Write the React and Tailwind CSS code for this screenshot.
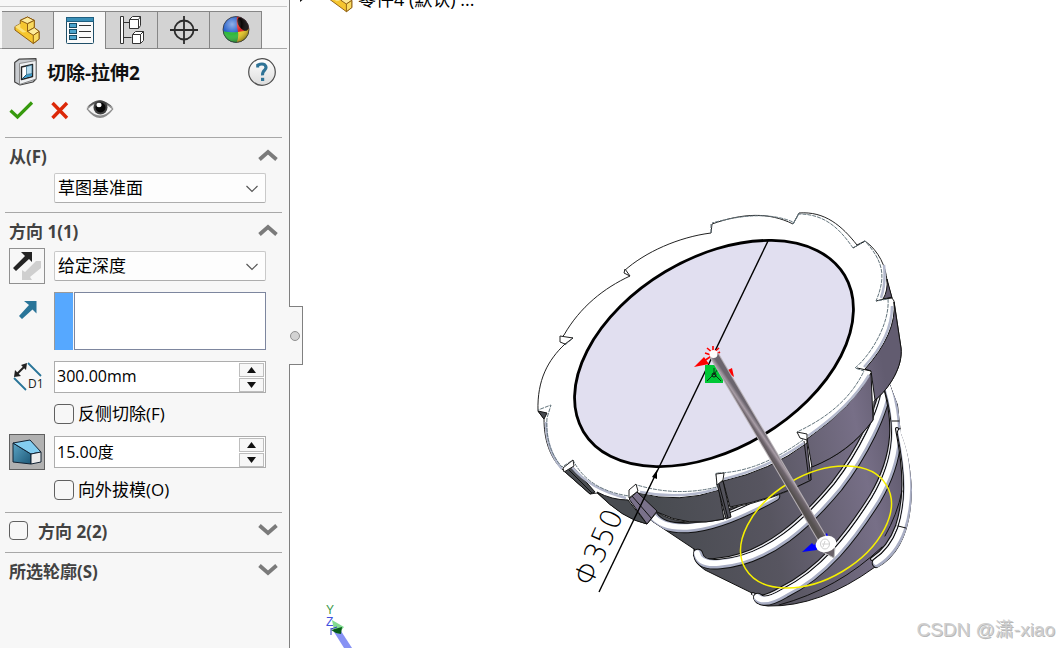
import React, { useState } from "react";

const uiFont = "font-['Open_Sans','Noto_Sans_CJK_SC',sans-serif]";

function PartIcon({ className }) {
  return (
    <svg className={className} viewBox="0 0 28 30" aria-hidden="true">
      <g stroke="#8a5a10" strokeWidth="1" strokeLinejoin="round">
        <path d="M1 11 L6.500 8 L6.500 4.500 L14 1 L21 4.500 L21 12 L26 16 L26 24 L20 28.500 L1 14.500Z" fill="#f6c62f" />
        <path d="M6.500 4.500 L14 1 L21 4.500 L14 8Z" fill="#fdeb9a" />
        <path d="M14 8 L21 4.500 L21 12 L14 16Z" fill="#f9d95e" />
        <path d="M14 16 L21 12 L26 16 L20 20Z" fill="#fdeb9a" />
        <path d="M20 20 L26 16 L26 24 L20 28.500Z" fill="#f9dc62" />
        <path d="M1 11 L6.500 8 L6.500 12 L13 16.500 L9 17Z" fill="#fbe27c" stroke="none" />
      </g>
    </svg>
  );
}

function PropertyIcon() {
  return (
    <svg width="28" height="27" viewBox="0 0 28 27" aria-hidden="true">
      <rect x="0.500" y="0.500" width="27" height="26" rx="1" fill="#fafafa" stroke="#1f4e68" />
      <rect x="0.500" y="0.500" width="27" height="4" fill="#3a8fb7" stroke="#1f5f80" />
      {[6.5, 12.5, 18.5].map((y) => (
        <g key={y}>
          <rect x="3.500" y={y} width="7" height="4" fill="#4ba3cc" stroke="#174a63" />
          <path d={`M13 ${y + 2}h12`} stroke="#333" strokeWidth="1" />
        </g>
      ))}
    </svg>
  );
}

function ConfigIcon() {
  return (
    <svg width="24" height="28" viewBox="0 0 24 28" fill="#fff" stroke="#333" strokeLinejoin="round" aria-hidden="true">
      <path d="M0.500 0.500h3v27h-3z" />
      <path d="M3.500 6.500h6M3.500 21.500h8" />
      <path d="M9.500 3.500l3-3h8v9l-2 3h-9z" />
      <path d="M9.500 3.500h9v9M18.500 3.500l2-3" />
      <path d="M12.500 18.500l3-3h8v9l-3 3h-8z" />
      <path d="M12.500 18.500h8v9M20.500 18.500l3-3" />
    </svg>
  );
}

function TargetIcon() {
  return (
    <svg width="28" height="28" viewBox="0 0 28 28" fill="none" stroke="#2b2b2b" strokeWidth="1.800" aria-hidden="true">
      <circle cx="14" cy="14" r="9.500" />
      <path d="M14 0v28M0 14h28" />
    </svg>
  );
}

function SphereIcon() {
  return (
    <svg width="28" height="28" viewBox="0 0 28 28" aria-hidden="true">
      <defs>
        <clipPath id="ball"><circle cx="14" cy="13.500" r="13" /></clipPath>
        <radialGradient id="shine" cx="0.350" cy="0.300" r="0.750">
          <stop offset="0" stopColor="#fff" stopOpacity="0.500" />
          <stop offset="0.500" stopColor="#fff" stopOpacity="0" />
          <stop offset="1" stopColor="#000" stopOpacity="0.400" />
        </radialGradient>
      </defs>
      <g clipPath="url(#ball)">
        <rect width="28" height="28" fill="#2460cc" />
        <path d="M15 0 Q14 8 16 16 L28 17 V0Z" fill="#e02020" />
        <path d="M0 15 Q8 17 16 16 Q17 23 14 28 H0Z" fill="#2fb83a" />
        <path d="M16 16 Q22 16 28 12 V28 H14 Q17 22 16 16Z" fill="#eccb20" />
        <ellipse cx="21" cy="8" rx="4.500" ry="7.500" transform="rotate(-35 21 8)" fill="#0a0505" />
      </g>
      <circle cx="14" cy="13.500" r="13" fill="url(#shine)" stroke="#333" strokeWidth="0.800" />
    </svg>
  );
}

function CutIcon() {
  return (
    <svg width="24" height="28" viewBox="0 0 24 28" strokeLinejoin="round" aria-hidden="true">
      <path d="M0.700 4.500L5 1.200L22 0.700V21L19 24L6 27L0.700 24Z" fill="#c9ccd0" stroke="#444" strokeWidth="1.200" />
      <path d="M5.500 5.500L22 2.500V21L5.500 26.500Z" fill="#eef0f2" stroke="#777" strokeWidth="0.800" />
      <path d="M7.500 9L18.500 6.500V18.500L7.500 21.500Z" fill="#fff" stroke="#222" strokeWidth="1.400" />
      <path d="M8.500 20.500L12.500 16.500L18 15.500V18Z" fill="#3b9ccb" />
      <path d="M12.500 8.500V16.500L18 15.500V7Z" fill="#b9dced" stroke="#28627f" strokeWidth="0.700" />
      <path d="M8 21L12.500 16.500" stroke="#1b536f" />
    </svg>
  );
}

function EyeIcon() {
  return (
    <svg width="28" height="20" viewBox="0 0 28 20" className="mb-0.5" aria-hidden="true">
      <path d="M0.500 10Q13 -7 27.500 10Q14 28 0.500 10Z" fill="#8b8b8b" />
      <path d="M2 10Q13 -2 26 10Q14 23 2 10Z" fill="#f4f4f4" />
      <path d="M0.500 9Q13 -6.500 27.500 9Q14 -1 0.500 9Z" fill="#5a5a5a" />
      <circle cx="14.500" cy="8.500" r="7" fill="#404040" />
      <circle cx="14.500" cy="8.500" r="5" fill="#080808" />
      <ellipse cx="13" cy="6" rx="2.600" ry="2.200" fill="#fff" />
    </svg>
  );
}

function Chevron({ down }) {
  return (
    <svg width="20" height="12" viewBox="0 0 20 12" className="mb-1" fill="none" stroke="#7b7b7b" strokeWidth="3.800" aria-hidden="true">
      <path d={down ? "M1.500 1.500L10 9L18.500 1.500" : "M1.500 10.500L10 3L18.500 10.500"} />
    </svg>
  );
}

function Dropdown({ label, options }) {
  return (
    <div className="relative w-[212px]">
      <select aria-label={label} className="block h-[30px] w-full appearance-none rounded-xs border border-[#c9c9c9] border-b-[#adadad] bg-[#fdfdfd] pl-[3px] text-[17px] leading-6 text-black outline-none">
        {options.map((o) => <option key={o}>{o}</option>)}
      </select>
      <svg className="pointer-events-none absolute top-3 right-2" width="12" height="8" viewBox="0 0 12 8" fill="none" stroke="#555" strokeWidth="1.200" aria-hidden="true">
        <path d="M0.500 1L6 6.500L11.500 1" />
      </svg>
    </div>
  );
}

function Spinner({ label, initial, step, unit }) {
  const [text, setText] = useState(initial);
  const bump = (d) => setText((parseFloat(text) + d * step).toFixed(2) + unit);
  const btn = "flex h-[14px] w-[25px] items-center justify-center border border-[#bdbdbd] bg-[#f7f7f7]";
  return (
    <div className="flex h-8 w-[212px] items-center border border-[#adadad] bg-white pr-px">
      <input aria-label={label} value={text} onChange={(e) => setText(e.target.value)} className="h-7 min-w-0 flex-1 bg-transparent pb-0.5 pl-0.5 text-base leading-6 text-black outline-none" />
      <div className="flex flex-col gap-px">
        <button type="button" aria-label={label + " +"} onClick={() => bump(1)} className={btn}>
          <svg width="9" height="6" viewBox="0 0 9 6" aria-hidden="true"><path d="M0 6L4.500 0L9 6Z" fill="#111" /></svg>
        </button>
        <button type="button" aria-label={label + " -"} onClick={() => bump(-1)} className={btn}>
          <svg width="9" height="6" viewBox="0 0 9 6" aria-hidden="true"><path d="M0 0L4.500 6L9 0Z" fill="#111" /></svg>
        </button>
      </div>
    </div>
  );
}

function Check({ label }) {
  return (
    <label className="flex h-5 items-center gap-1 pl-[45px] text-[17px] leading-5 text-black">
      <input type="checkbox" className="size-5 shrink-0 appearance-none rounded border border-[#606060] bg-[#f7f7f7] checked:bg-[#2b7fc4]" />
      <span>{label}</span>
    </label>
  );
}

function Section({ title, collapsed, checkable, children }) {
  return (
    <section className="mr-[7px] ml-[5px] border-t border-[#a8a8a8] pl-1">
      <div className={collapsed ? "flex h-[39px] items-center justify-between pr-1 pb-0.5" : "flex h-[35px] items-center justify-between pt-0.5 pr-1"}>
        {checkable ? (
          <label className="flex items-center gap-2.5 text-[17px] leading-6 font-bold text-[#424242]">
            <input type="checkbox" className="mb-0.5 size-[19px] appearance-none rounded border border-[#606060] bg-[#f7f7f7] checked:bg-[#2b7fc4]" />
            <span>{title}</span>
          </label>
        ) : (
          <h2 className="text-[17px] leading-6 font-bold text-[#424242]">{title}</h2>
        )}
        <button type="button" aria-label={title} aria-expanded={!collapsed}><Chevron down={collapsed} /></button>
      </div>
      {children}
    </section>
  );
}

function PropertyPanel() {
  const tabs = [
    ["FeatureManager", <PartIcon key="p" className="h-[29px] w-[27px]" />],
    ["PropertyManager", <PropertyIcon key="m" />],
    ["ConfigurationManager", <ConfigIcon key="c" />],
    ["DimXpertManager", <TargetIcon key="t" />],
    ["DisplayManager", <SphereIcon key="s" />],
  ];
  return (
    <aside className="relative z-10 flex w-[290px] shrink-0 flex-col border-r border-[#808080] bg-[#f7f7f7]">
      <div className="mr-0.5 h-[7px] border-b border-[#c8c8c8]" />
      <div role="tablist" className="mr-0.5 flex pt-1">
        <div className="w-0.5 border-b border-[#a8a8a8]" />
        {tabs.map(([name, icon], i) => (
          <button
            key={name}
            type="button"
            role="tab"
            aria-label={name}
            aria-selected={i === 1}
            className={
              i === 1
                ? "flex h-[38px] w-[52px] items-center justify-center border-t border-r border-[#868686] bg-[#f7f7f7]"
                : "flex h-[38px] w-[52px] items-center justify-center border-t border-r border-b border-[#868686] bg-[#d3d3d3]"
            }
          >
            {icon}
          </button>
        ))}
        <div className="flex-1 border-b border-[#a8a8a8]" />
      </div>

      <header className="flex items-center gap-[9px] pt-2 pr-[13px] pl-[14px]">
        <CutIcon />
        <h1 className="flex-1 pt-0.5 text-[19px] leading-7 font-bold text-[#111]">切除-拉伸2</h1>
        <button type="button" aria-label="帮助" className="size-7">
          <svg width="28" height="28" viewBox="0 0 28 28" aria-hidden="true">
            <defs>
              <linearGradient id="help" x2="0" y2="1"><stop stopColor="#fff" /><stop offset="1" stopColor="#dcdcdc" /></linearGradient>
            </defs>
            <circle cx="14" cy="14" r="13.300" fill="url(#help)" stroke="#4d4d4d" strokeWidth="1.200" />
            <path d="M9.700 9.500V7.200Q14 5 16.800 6.800Q19.300 9 16.800 12Q14.300 14 14.500 17.300" fill="none" stroke="#2f7396" strokeWidth="3" />
            <rect x="13" y="19.800" width="3.200" height="3.200" fill="#2f7396" />
          </svg>
        </button>
      </header>

      <div className="mt-[11px] mb-[15px] flex h-6 items-center gap-[17px] pl-[9px]">
        <button type="button" aria-label="确定">
          <svg width="25" height="20" viewBox="0 0 25 20" aria-hidden="true"><path d="M1.500 10.500L8.500 17L23 2.500" fill="none" stroke="#379a0e" strokeWidth="3.200" /></svg>
        </button>
        <button type="button" aria-label="取消">
          <svg width="18" height="20" viewBox="0 0 18 20" aria-hidden="true"><path d="M1.500 3L16 18M16 3L1.500 18" stroke="#dc2808" strokeWidth="3.400" /></svg>
        </button>
        <button type="button" aria-label="预览"><EyeIcon /></button>
      </div>

      <Section title="从(F)">
        <div className="pb-[9px] pl-[45px]"><Dropdown label="从" options={["草图基准面", "曲面/面/基准面", "顶点", "等距"]} /></div>
      </Section>

      <Section title="方向 1(1)">
        <div className="flex h-9 items-center gap-[9px]">
          <button type="button" aria-label="反向" className="flex size-9 items-center justify-center border border-[#909090]">
            <svg width="30" height="30" viewBox="0 0 30 30" aria-hidden="true">
              <path d="M29 10V17L18 26L20 29H10V19L13 21L24 10Z" fill="#cfcfcf" />
              <path d="M9 1H20V11L17 8L4 20L1 17L13 5Z" fill="#242424" />
            </svg>
          </button>
          <Dropdown label="终止条件" options={["给定深度", "完全贯穿", "成形到下一面", "两侧对称"]} />
        </div>
        <div className="mt-2 flex h-[58px]">
          <div className="w-[45px] pt-2 pl-[9px]">
            <svg width="19" height="20" viewBox="0 0 19 20" aria-hidden="true">
              <path d="M6 1H18.500V13.500L14.500 9.500L4 19L1 16L11 5Z" fill="#2a7599" />
            </svg>
          </div>
          <div className="mr-px w-[19px] border-t border-l border-[#999] bg-[#56a8ff]" />
          <div role="listbox" aria-label="拉伸方向" tabIndex={0} className="w-[192px] border border-[#7d869e] bg-white" />
        </div>
        <div className="mt-[11px] flex h-8">
          <div className="w-[45px] pl-1">
            <svg width="32" height="31" viewBox="0 0 32 31" aria-hidden="true">
              <path d="M15 2L28 15M1 17L13 29" stroke="#2a7599" strokeWidth="1.800" />
              <path d="M4 13L12 5" stroke="#222" strokeWidth="2" />
              <path d="M1 16L2 9L8 15ZM14 2L8 4L13 9Z" fill="#222" />
              <text x="15" y="27" fontSize="12" fill="#222" fontFamily="Open Sans, sans-serif">D1</text>
            </svg>
          </div>
          <Spinner label="深度" initial="300.00mm" step={10} unit="mm" />
        </div>
        <div className="mt-[11px]"><Check label="反侧切除(F)" /></div>
        <div className="mt-[10px] flex h-9 items-center gap-[9px]">
          <button type="button" aria-label="拔模" aria-pressed="true" className="flex size-9 items-center justify-center border border-[#606060] bg-[#b1b1b1]">
            <svg width="30" height="28" viewBox="0 0 30 28" strokeLinejoin="round" aria-hidden="true">
              <defs><linearGradient id="draft" x2="1" y2="1"><stop stopColor="#5ba5c6" /><stop offset="1" stopColor="#1d5877" /></linearGradient></defs>
              <path d="M1 5L19 16V26L1 24Z" fill="url(#draft)" stroke="#123" />
              <path d="M1 5L18 2L29 14L19 16Z" fill="#83cdf0" stroke="#123" />
              <path d="M19 16L29 14V24L19 26Z" fill="#ececec" stroke="#123" />
            </svg>
          </button>
          <Spinner label="拔模角度" initial="15.00度" step={1} unit="度" />
        </div>
        <div className="mt-[10px] pb-3"><Check label="向外拔模(O)" /></div>
      </Section>

      <Section title="方向 2(2)" collapsed checkable />
      <Section title="所选轮廓(S)" collapsed />

      <button type="button" aria-label="折叠面板" className="absolute top-[306px] -right-[14px] flex h-[59px] w-[14px] items-center justify-center border border-l-0 border-[#808080] bg-[#f7f7f7] pr-px">
        <span className="size-[10px] rounded-full border border-[#909090] bg-[#d3d3d3]" />
      </button>
    </aside>
  );
}

const ribs = [
  "M653 516 Q662 529 688 528 Q722 526 775 496",
  "M698 554 Q700 566 720 564 C770 560 808 523 838 487 C862 456 885 412 887 384",
  "M758 598 Q765 605 785 593 C825 573 852 538 876 500 C902 456 899 422 889 388",
  "M902 433 C911 478 910 505 902 530 Q894 552 877 563",
];

function Model() {
  return (
    <svg className="absolute inset-0 h-full w-full" viewBox="290 0 769 648" preserveAspectRatio="xMinYMin meet" role="img" aria-label="零件4">
      <defs>
        <linearGradient id="body" gradientUnits="userSpaceOnUse" x1="650" y1="500" x2="900" y2="450">
          <stop stopColor="#484b50" /><stop offset="0.450" stopColor="#575560" /><stop offset="0.850" stopColor="#776f87" /><stop offset="1" stopColor="#625c70" />
        </linearGradient>
        <linearGradient id="rod" gradientUnits="userSpaceOnUse" x1="765" y1="453" x2="774" y2="447">
          <stop stopColor="#55504f" /><stop offset="0.450" stopColor="#6f666e" /><stop offset="0.700" stopColor="#a89da6" /><stop offset="1" stopColor="#6b656e" />
        </linearGradient>
        <clipPath id="shape">
          <path d="M640 490L650 520L694 549Q690 565 705 572L754 596Q750 607 785 608Q830 602 877 568Q911 550 912 490Q910 455 901 434L898 405L888 380L800 420Z" />
        </clipPath>
      </defs>

      <path d="M640 490L652 521L694 549Q692 562 705 570L754 594Q751 605 768 606Q820 607 875 567Q908 549 911 490Q908 455 900 434L897 405L888 380L800 420Z" fill="url(#body)" stroke="#111" />
      <g clipPath="url(#shape)" fill="none" strokeLinecap="round">
        {ribs.map((d) => (
          <g key={d}>
            <path d={d} transform="translate(-5 -4)" stroke="#111" strokeWidth="4" />
            <path d={d} transform="translate(-5 -4)" stroke="#e8e8ee" strokeWidth="1.800" />
            <path d={d} stroke="#111" strokeWidth="10.500" />
            <path d={d} stroke="#a9aec4" strokeWidth="8.500" />
            <path d={d} transform="translate(-1 -1)" stroke="#fff" strokeWidth="5.600" />
          </g>
        ))}
        <path d="M779 605Q838 589 882 547M885 536Q897 515 902 491M898 526l8 2M892 421l7 0" stroke="#111" strokeWidth="1" />
      </g>

      <path d="M799 213C825 211 842 226 857 245L865 241C879 251 886 267 887 281L892 298L894 301L901 348C903 366 890 388 874 401L873 420C857 443 837 457 811 467L811 480Q775 500 730 508L724 519Q680 528 657 512L647 524Q623 518 597 493L590 494L564 471C549 458 544 438 544 419L538 411C537 380 548 360 565 344L560 339L564 335C580 307 604 288 630 276L624 271C645 252 679 237 711 233L712 224C743 213 769 212 793 224Z" fill="#fff" stroke="#222" />

      <g stroke="#111" strokeWidth="1" strokeLinejoin="round" fill="url(#body)">
        <path d="M887 279L892 298L883 299Q888 291 887 279Z" />
        <path d="M894 302L901 348C903 366 890 388 875 400L871 371L865 369Q897 333 894 302Z" />
        <path d="M871 373L873 420C857 442 837 457 812 467L807 439Q854 406 871 373Z" />
        <path d="M807 443L811 480Q775 499 730 507L723 481Q770 471 807 443Z" />
        <path d="M719 490L724 519Q688 528 657 512L638 493Q680 504 719 490Z" />
        <path d="M597 492Q612 500 628 500L647 524Q622 519 597 492Z" />
        <path d="M564 471L573 467L595 492L590 494Z" />
        <path d="M629 499L637 492L657 511L647 524Z" fill="#7a718a" />
        <path d="M717 484L723 481L731 517L726 519Z" />
        <path d="M538 411L547 413L544 419Z" />
      </g>
      <g fill="none" stroke="#111">
        <path d="M632 496L652 519M568 469L592 493M719 484L728 518M804 441L809 480" />
        <path d="M807 439L807 443M857 368L871 371M876 301L892 297M853 248L865 241" />
      </g>
      <g fill="none" stroke="#b4b9cd" strokeWidth="2.500">
        <path d="M892 306Q892 337 864 367M869 375Q850 407 808 436M804 443Q766 469 724 479M717 489Q680 500 640 492M626 498Q590 489 572 467M562 469Q546 450 546 422M884 265Q886 283 881 298" />
      </g>
      <g fill="none" stroke="#64757d" strokeWidth="1" strokeDasharray="4 1">
        <path d="M799 213L793 224L793 222Q763 209 712 223M793 224L799 214C825 214 840 229 853 248L865 241C884 262 886 277 876 301L888 299C890 323 871 355 855 368L864 371C848 404 820 421 797 432L803 440Q757 473 716 473L717 487Q677 497 637 485L629 496Q588 490 573 460L562 467Q545 448 547 418L551 405L538 410M560 338L573 338L565 345M624 271L630 276M711 233V224" />
      </g>
      <g fill="#fff" stroke="#222" strokeWidth="1" strokeLinejoin="round">
        <path d="M563 468L573 460L574 466L564 472ZM629 490L636 484L638 491L629 498ZM716 474L724 473L723 480L717 485Z" />
        <path d="M797 432L807 434L807 440L800 438Z" />
        <path d="M560 336L573 338L565 344L560 342ZM625 269L630 276L624 273Z" />
      </g>

      <ellipse cx="714" cy="353.500" rx="152.200" ry="95.200" transform="rotate(-30.900 714 353.500)" fill="#e1dff0" stroke="#000" strokeWidth="2.800" />
      <path d="M768 241L599 592" stroke="#000" strokeWidth="1.400" />
      <path d="M657 470L657 479L652 477Z" fill="#000" />
      <text transform="translate(591 588) rotate(-66)" fontFamily="DejaVu Sans" fontWeight="200" fontSize="29" fill="#000">Φ350</text>

      <ellipse cx="816" cy="527" rx="82" ry="51.700" transform="rotate(-30.600 816 527)" fill="none" stroke="#f6f000" strokeWidth="1.500" />

      <rect x="705" y="365" width="18" height="18" fill="#00c736" />
      <path d="M707 381L714 374L721 381M714 374L719 368M714 374V368" stroke="#063d13" fill="none" />
      <circle cx="714" cy="375" r="2" fill="none" stroke="#111" />
      <path d="M694 367L704 357L709 364ZM726 371L732 368L734 377Z" fill="#f00" />
      <path d="M704 361L713 355M713 353V346M713 353L707 348M713 353L719 348M711 355L705 353M715 355L720 352" stroke="#f00" strokeWidth="1.600" />
      <path d="M802 552L812 543L814 545L827 533L828 536L817 548L817 550Z" fill="#00f" />
      <path d="M714 355L826 545" stroke="#b7b1b6" strokeWidth="10" />
      <path d="M714 355L826 545" stroke="url(#rod)" strokeWidth="8" />
      <circle cx="713.500" cy="354" r="4" fill="#fff" />
      <path d="M819 550L835 547L834 558Z" fill="#696269" stroke="#bbb" />
      <ellipse cx="826" cy="544" rx="10.500" ry="8" transform="rotate(-15 826 544)" fill="#fff" />
      <ellipse cx="825" cy="544" rx="4.500" ry="5" fill="none" stroke="#ccc" />
      <path d="M822 544h7M825 541l-2 6" stroke="#d2d2d2" />

      <g fontFamily="Liberation Sans, sans-serif" fontSize="12">
        <text x="326" y="614" fill="#3c9a48">Y</text>
        <text x="326" y="626" fill="#4050e0">Z</text>
      </g>
      <path d="M334 632L341 631L352 648H344Z" fill="#8792f4" />
      <path d="M332 620L344 627L338 634L334 630Z" fill="#82db91" />
      <path d="M331 630L342 627L341 634L336 633Z" fill="#075c19" />
      <path d="M331 628V635M331 629L337 627" stroke="#3441c5" />
    </svg>
  );
}

export default function App() {
  return (
    <div className={`flex min-h-screen overflow-hidden bg-white ${uiFont}`}>
      <PropertyPanel />
      <main className="relative min-w-0 flex-1 overflow-hidden bg-white">
        <Model />
        <div className="absolute -top-[15px] left-2 flex items-center text-[18px] leading-7 text-black">
          <svg className="mr-[22px]" width="8" height="10" viewBox="0 0 8 10" aria-hidden="true"><path d="M2 0L7 4L2 8Z" fill="#111" /></svg>
          <PartIcon className="h-[27px] w-[26px]" />
          <span className="pl-1">零件4 (默认) ...</span>
        </div>
        <p className="absolute right-1 bottom-1 font-['Liberation_Sans','Noto_Sans_CJK_SC',sans-serif] text-[19px] leading-7 text-[#cfcfcf] [text-shadow:1px_1px_0_#b8b8b8]">CSDN @潇-xiao</p>
      </main>
    </div>
  );
}
